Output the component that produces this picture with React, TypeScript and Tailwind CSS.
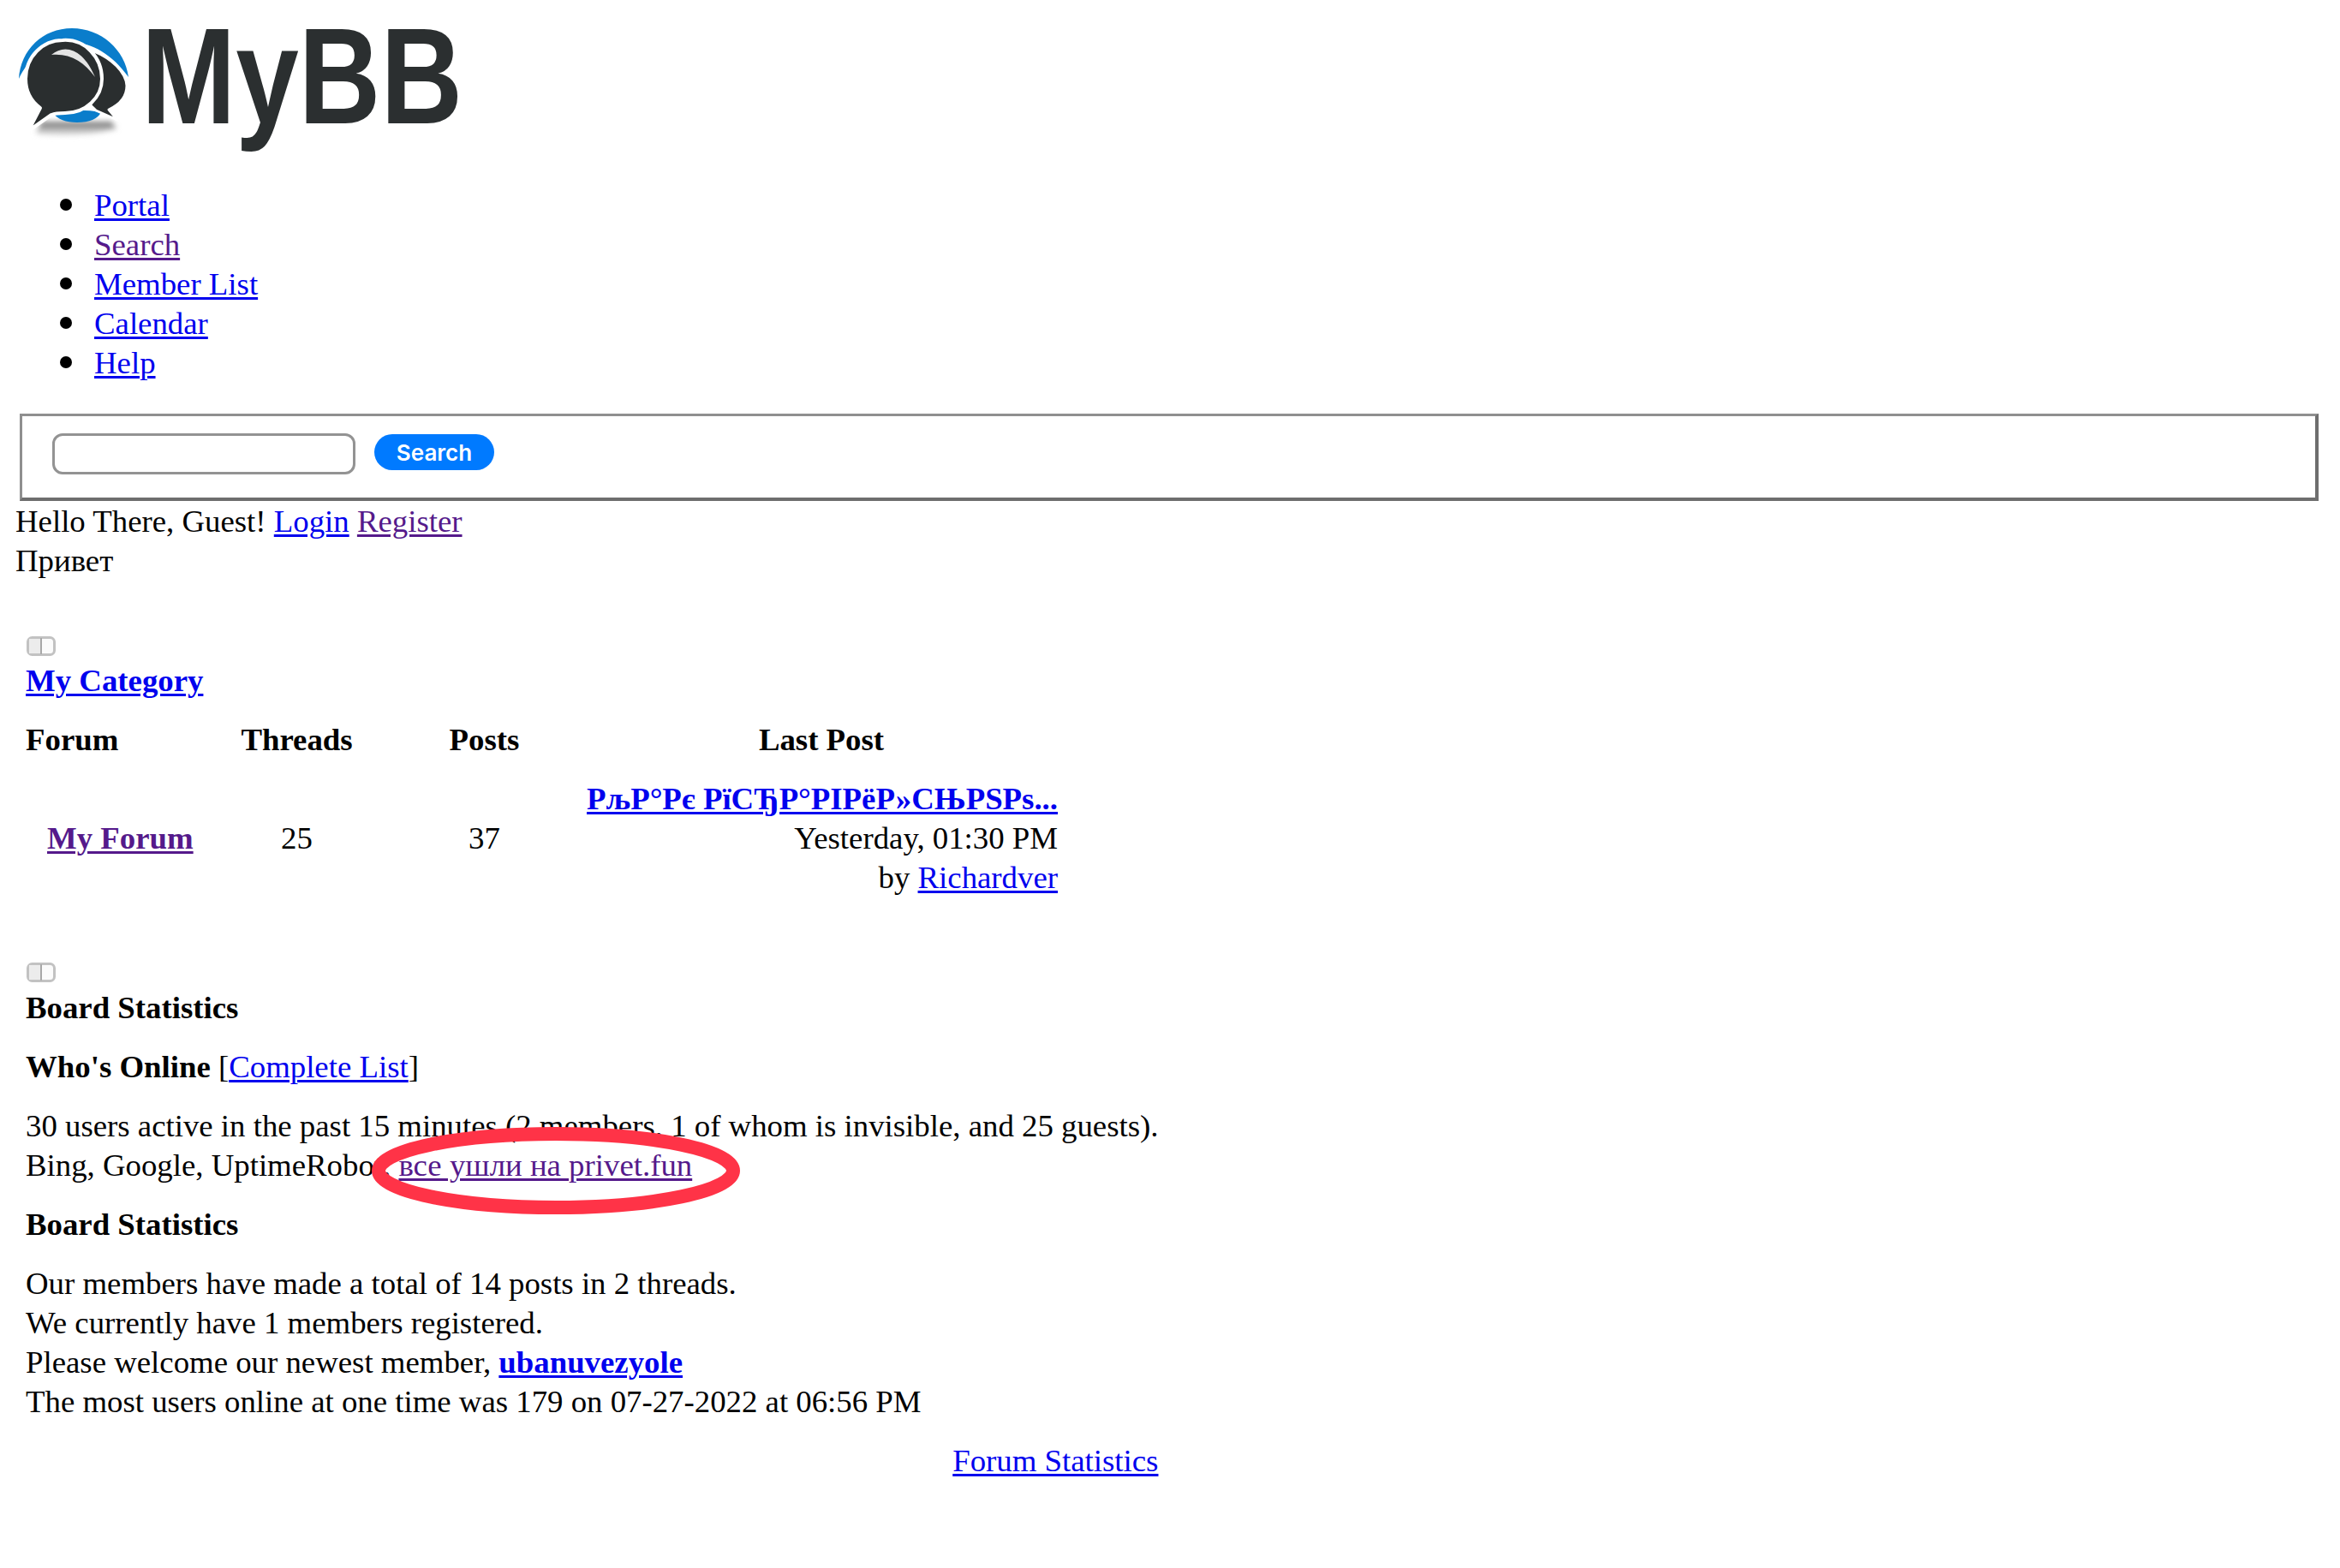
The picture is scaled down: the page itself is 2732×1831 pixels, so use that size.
// "Как правильно..." as the board shows it, broken encoding included
const LAST_POST_TITLE = "Рљ\u0420°\u0420\u0454 \u0420\u0457\u0421\u0402\u0420°\u0420\u0406\u0420\u0451\u0420»\u0421\u040A\u0420\u0405\u0420\u0455...";

const linkClass = "text-[#0000ee] underline decoration-[2.5px] underline-offset-[3px]";
const visitedClass = "text-[#551a8b] underline decoration-[2.5px] underline-offset-[3px]";

function Logo() {
  return (
    <svg className="block w-[530px] h-[162px]" viewBox="18 18 530 162">
      <defs>
        <filter id="soft" x="-20%" y="-100%" width="140%" height="300%">
          <feGaussianBlur stdDeviation="3" />
        </filter>
        <linearGradient id="floor" x1="0" y1="0" x2="0" y2="1">
          <stop offset="0" stopColor="#6f6f6f" />
          <stop offset="1" stopColor="#e8e8e8" />
        </linearGradient>
      </defs>
      <path d="M48 142 H130 L136 150 Q90 162 42 156 Z" fill="url(#floor)" filter="url(#soft)" />
      <path d="M22 92 C24 58 50 33 84 33 C118 33 146 58 150 90 C130 62 104 48 80 50 C52 53 32 70 22 92 Z" fill="#0a7dcb" />
      <path d="M62 132 Q90 126 118 131 Q112 143 90 143 Q70 143 62 132 Z" fill="#0a7dcb" />
      <path
        d="M110 60 C130 68 147 84 148 100 C148 113 140 122 127 128 L137 140 L112 129 Q100 120 98 100 Z"
        fill="#2a2e2f"
        stroke="#ffffff"
        strokeWidth="3"
        strokeLinejoin="round"
      />
      <path
        d="M73 47 C100 45 119 68 119 92 C119 114 100 132 76 132 C70 132 65 132 60 134 L33 153 L47 126 C36 118 30 106 30 92 C30 66 50 47 73 47 Z"
        fill="#2a2e2f"
        stroke="#ffffff"
        strokeWidth="4"
        strokeLinejoin="round"
      />
      <path d="M60 64 C76 50 98 58 111 90 C98 72 82 62 60 64 Z" fill="#e4e4e4" />
      <text
        x="165"
        y="144"
        fontFamily="'Liberation Sans', sans-serif"
        fontWeight="700"
        fontSize="159"
        fill="#2b2f30"
        textLength="375"
        lengthAdjust="spacingAndGlyphs"
      >
        MyBB
      </text>
    </svg>
  );
}

function CollapseIcon() {
  return (
    <svg className="block w-[36px] h-[25px] ml-[12px]" viewBox="0 0 36 25">
      <rect x="2.5" y="2.5" width="31" height="20" rx="5" fill="#fbfbfb" stroke="#c2c2c2" strokeWidth="3" />
      <rect x="4" y="4" width="13" height="17" fill="#ececec" />
      <rect x="17" y="3" width="2" height="19" fill="#a8a8a8" />
    </svg>
  );
}

function NavItem({ label, visited }: { label: string; visited?: boolean }) {
  return (
    <li className="flex items-center gap-[26px]">
      <span className="mb-[2px] h-[14px] w-[14px] rounded-full bg-black" />
      <a className={visited ? visitedClass : linkClass}>{label}</a>
    </li>
  );
}

export default function App() {
  return (
    <div className="relative min-h-[1831px] overflow-hidden bg-white px-[18px] pt-[18px] font-['Liberation_Serif',serif] text-[36.8px] leading-[46px] text-black">
      <Logo />

      <ul className="mt-[37px] mb-[36px] list-none pl-[52px]">
        <NavItem label="Portal" />
        <NavItem label="Search" visited />
        <NavItem label="Member List" />
        <NavItem label="Calendar" />
        <NavItem label="Help" />
      </ul>

      <div className="ml-[5px] flex h-[102px] w-[2684px] items-start gap-[22px] border-t-[3px] border-r-[4px] border-b-[4px] border-l-[3px] border-t-[#8f8f8f] border-r-[#6e6e6e] border-b-[#6e6e6e] border-l-[#8f8f8f] pt-[20px] pl-[35px]">
        <input className="h-[48px] w-[354px] rounded-[12px] border-[3px] border-[#939393] bg-white" />
        <button className="mt-px h-[42px] w-[140px] rounded-full bg-[#007aff] pt-[2px] font-['Inter',sans-serif] text-[26px] leading-[40px] font-semibold text-white">
          Search
        </button>
      </div>

      <div className="mt-px">
        Hello There, Guest! <a className={linkClass}>Login</a> <a className={visitedClass}>Register</a>
      </div>
      <div>Привет</div>

      <div className="mt-[64px]">
        <CollapseIcon />
      </div>
      <div className="mt-[5px] ml-[12px] font-bold">
        <a className={linkClass}>My Category</a>
      </div>

      <table className="mt-[23px] ml-[12px] table-fixed">
        <thead>
          <tr>
            <th className="w-[215px] pb-[23px] text-left font-bold">Forum</th>
            <th className="w-[203px] pb-[23px] text-center font-bold">Threads</th>
            <th className="w-[235px] pb-[23px] text-center font-bold">Posts</th>
            <th className="w-[552px] pb-[23px] text-center font-bold">Last Post</th>
          </tr>
        </thead>
        <tbody>
          <tr>
            <td className="pl-[25px] align-middle font-bold">
              <a className={visitedClass}>My Forum</a>
            </td>
            <td className="text-center align-middle">25</td>
            <td className="text-center align-middle">37</td>
            <td className="text-right align-middle">
              <a className={`${linkClass} font-bold`}>{LAST_POST_TITLE}</a>
              <br />
              Yesterday, 01:30 PM
              <br />
              by <a className={linkClass}>Richardver</a>
            </td>
          </tr>
        </tbody>
      </table>

      <div className="mt-[75px]">
        <CollapseIcon />
      </div>
      <div className="mt-[6px] ml-[12px] w-fit">
        <div className="font-bold">Board Statistics</div>
        <div className="mt-[23px]">
          <span className="font-bold">Who's Online</span> [<a className={linkClass}>Complete List</a>]
        </div>
        <div className="mt-[23px]">
          30 users active in the past 15 minutes (2 members, 1 of whom is invisible, and 25 guests).
          <br />
          Bing, Google, UptimeRobot, <a className={visitedClass}>все ушли на privet.fun</a>
        </div>
        <div className="mt-[23px] font-bold">Board Statistics</div>
        <div className="mt-[23px]">
          Our members have made a total of 14 posts in 2 threads.
          <br />
          We currently have 1 members registered.
          <br />
          Please welcome our newest member, <a className={`${linkClass} font-bold`}>ubanuvezyole</a>
          <br />
          The most users online at one time was 179 on 07-27-2022 at 06:56 PM
        </div>
        <div className="mt-[23px] text-right">
          <a className={linkClass}>Forum Statistics</a>
        </div>
      </div>

      {/* red marker ring drawn over the page */}
      <svg className="absolute top-[1313px] left-[430px] h-[108px] w-[438px]" viewBox="0 0 438 108">
        <ellipse cx="219" cy="54" rx="207" ry="43" fill="none" stroke="#ff3347" strokeWidth="16" />
      </svg>
    </div>
  );
}
